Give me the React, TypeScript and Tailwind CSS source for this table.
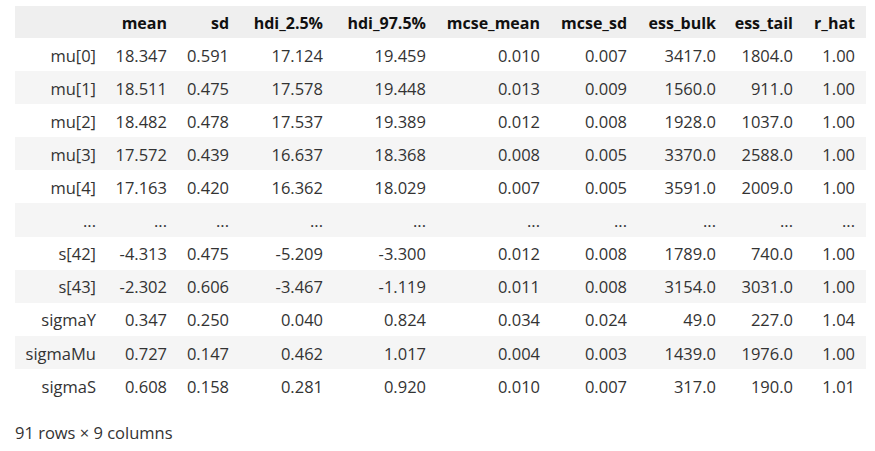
const cols = ["mean", "sd", "hdi_2.5%", "hdi_97.5%", "mcse_mean", "mcse_sd", "ess_bulk", "ess_tail", "r_hat"]

const rows: [string, ...string[]][] = [
  ["mu[0]", "18.347", "0.591", "17.124", "19.459", "0.010", "0.007", "3417.0", "1804.0", "1.00"],
  ["mu[1]", "18.511", "0.475", "17.578", "19.448", "0.013", "0.009", "1560.0", "911.0", "1.00"],
  ["mu[2]", "18.482", "0.478", "17.537", "19.389", "0.012", "0.008", "1928.0", "1037.0", "1.00"],
  ["mu[3]", "17.572", "0.439", "16.637", "18.368", "0.008", "0.005", "3370.0", "2588.0", "1.00"],
  ["mu[4]", "17.163", "0.420", "16.362", "18.029", "0.007", "0.005", "3591.0", "2009.0", "1.00"],
  ["...", "...", "...", "...", "...", "...", "...", "...", "...", "..."],
  ["s[42]", "-4.313", "0.475", "-5.209", "-3.300", "0.012", "0.008", "1789.0", "740.0", "1.00"],
  ["s[43]", "-2.302", "0.606", "-3.467", "-1.119", "0.011", "0.008", "3154.0", "3031.0", "1.00"],
  ["sigmaY", "0.347", "0.250", "0.040", "0.824", "0.034", "0.024", "49.0", "227.0", "1.04"],
  ["sigmaMu", "0.727", "0.147", "0.462", "1.017", "0.004", "0.003", "1439.0", "1976.0", "1.00"],
  ["sigmaS", "0.608", "0.158", "0.281", "0.920", "0.010", "0.007", "317.0", "190.0", "1.01"],
]

const grid = "grid grid-cols-[92px_71px_62px_94px_103px_114px_87px_89px_77px_62px]"

export default function App() {
  return (
    <div className="w-[875px] h-[451px] bg-white text-[#333] text-[16.5px] font-['Open_Sans',sans-serif] overflow-hidden">
      <div className="ml-[15px] mt-[6px] w-[851px]">
        <div className={`${grid} h-[32px] items-center pt-[1px] bg-[#efefef] font-bold text-[16px] text-[#111]`}>
          <div />
          {cols.map((c) => (
            <div key={c} className="text-right pr-[11px] whitespace-nowrap">
              {c}
            </div>
          ))}
        </div>
        {rows.map((r, i) => (
          <div key={i} className={`${grid} h-[33.1px] items-center pt-[3px] ${i % 2 === 1 ? "bg-[#f5f5f5]" : "bg-white"}`}>
            {r.map((v, j) => (
              <div key={j} className="text-right pr-[11px] whitespace-nowrap">
                {v}
              </div>
            ))}
          </div>
        ))}
      </div>
      <p className="ml-[15px] mt-[19px]">91 rows × 9 columns</p>
    </div>
  )
}
